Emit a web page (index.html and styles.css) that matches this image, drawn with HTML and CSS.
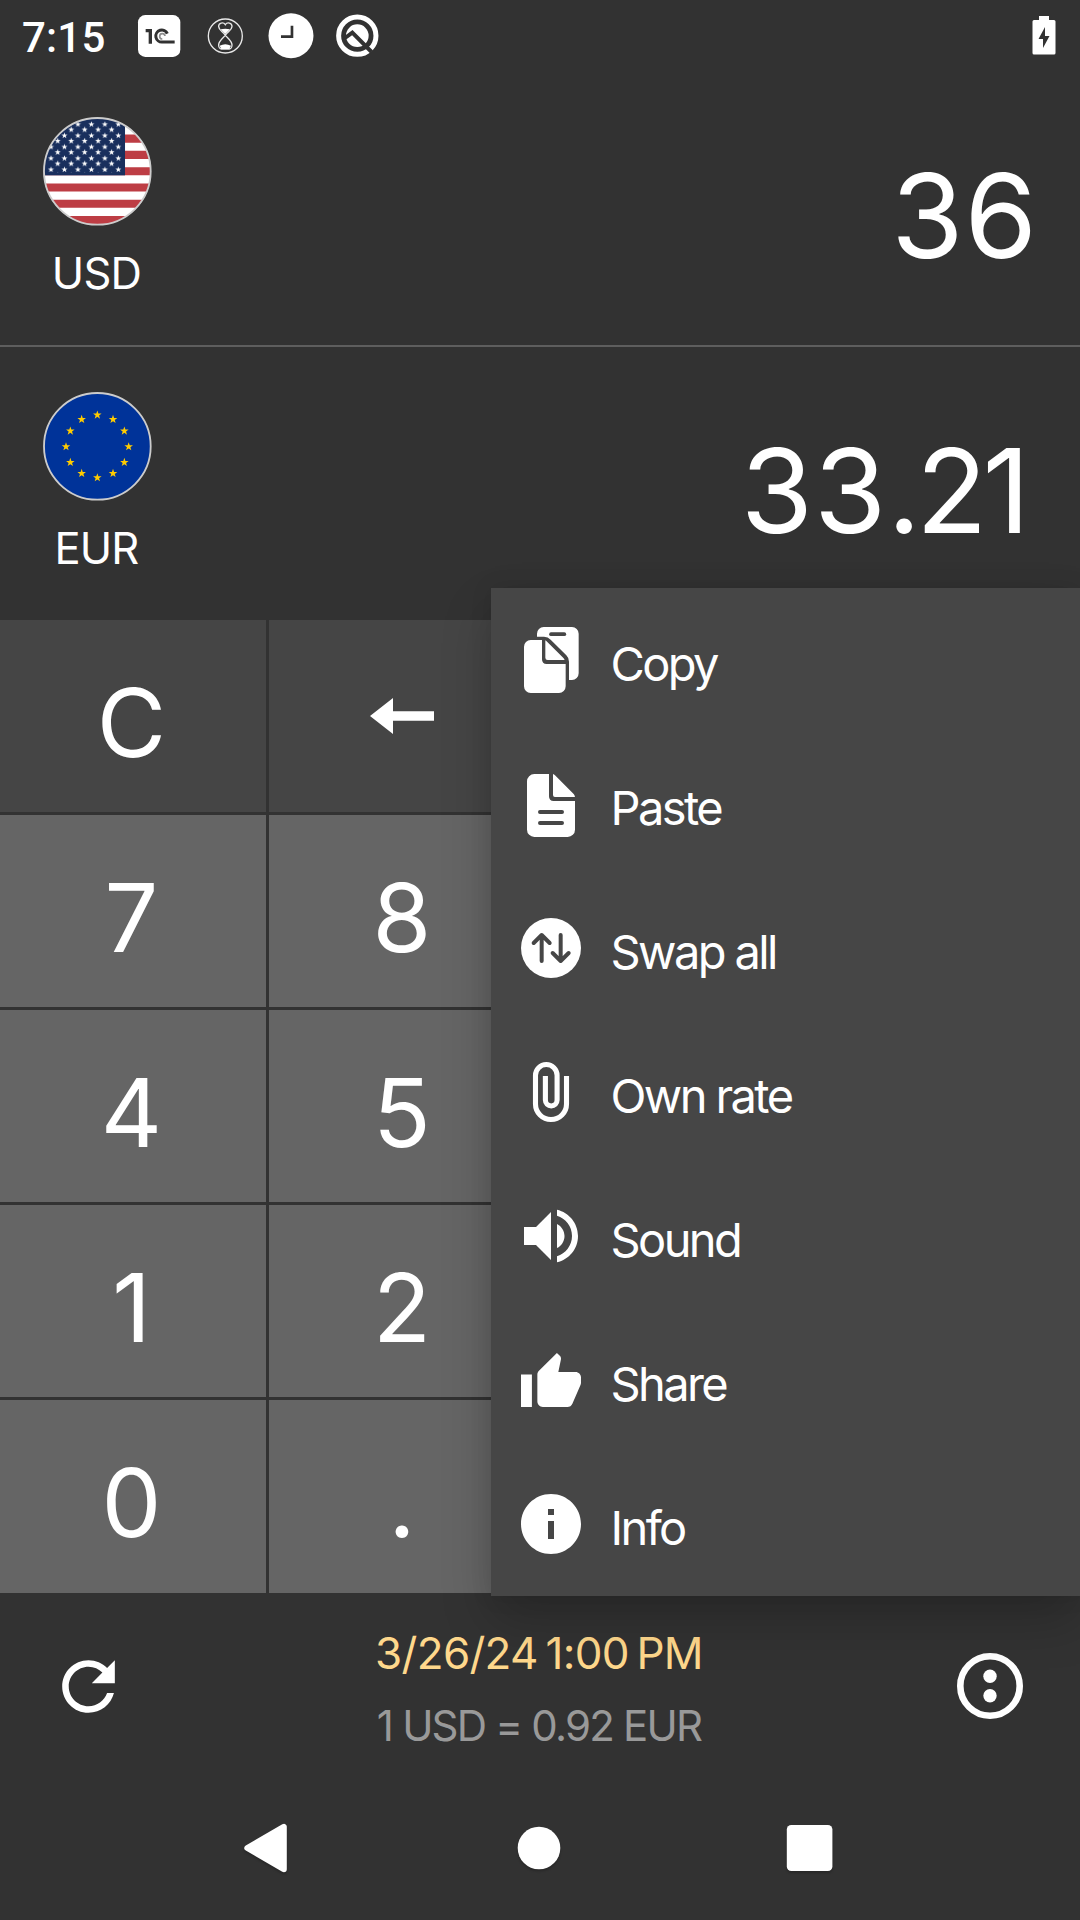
FILE: index.html
```html
<!DOCTYPE html>
<html lang="en">
<head>
<meta charset="utf-8">
<title>Currency converter</title>
<link rel="stylesheet" href="styles.css">
</head>
<body>
<div class="screen">
  <header class="status">
    <span class="clock">7:15</span>
    <svg class="status-icons" viewBox="400 0 760 216">
      <rect x="415" y="45" width="127" height="126" rx="22" fill="#fff"/>
      <g fill="none" stroke="#323232" stroke-width="10">
        <path d="M438 92h14v39"/>
        <path d="M503 101a18 18 0 1 0-15 25h37" stroke-width="9"/>
        <path d="M496 108a8 8 0 1 0-8 9" stroke-width="5" opacity=".55"/>
      </g>
      <g fill="none" stroke="#e8e8e8" stroke-width="4">
        <circle cx="677" cy="108" r="51"/>
        <path d="M677 74c-5-8-21-7-20 6 1 12 13 15 20 26 7-11 19-14 20-26 1-13-15-14-20-6zM677 106c-7 8-21 18-20 30 0 6 4 11 8 11h24c4 0 8-5 8-11 1-12-13-22-20-30z" stroke-width="4"/>
      </g>
      <path d="M663 88q14-4 28 0l-14 14zM660 137q17-9 34 0l-5 10h-24z" fill="#fff"/>
      <circle cx="874" cy="107" r="67.500" fill="#fff"/>
      <path d="M877 77v33h-33" fill="none" stroke="#323232" stroke-width="8"/>
      <circle cx="1073" cy="107" r="56" fill="none" stroke="#fff" stroke-width="15"/>
      <circle cx="1073" cy="107" r="34" fill="#fff"/>
      <path d="M1036 114l22-16 58 58" fill="none" stroke="#323232" stroke-width="12"/>
    </svg>
    <svg class="battery" viewBox="0 0 24 40">
      <path d="M7 0h10v4h5a1.500 1.500 0 0 1 1.500 1.500v31.500a1.500 1.500 0 0 1-1.500 1.500H2A1.500 1.500 0 0 1 .5 37V5.500A1.500 1.500 0 0 1 2 4h5z" fill="#fff"/>
      <path d="M13 11L6.500 23H11v9l6.500-12H13z" fill="#323232"/>
    </svg>
  </header>

  <section class="currency">
    <div class="unit">
      <svg class="flag" viewBox="39 50 326 326">
        <defs>
          <clipPath id="disc"><circle cx="202" cy="213" r="161"/></clipPath>
          <path id="star" d="M0-10L2.350-3.240 9.510-3.090 3.800 1.240 5.880 8.090 0 4 -5.880 8.090 -3.800 1.240 -9.510-3.090 -2.350-3.240z"/>
          <pattern id="stars" patternUnits="userSpaceOnUse" x="53" y="62" width="40.400" height="34">
            <use href="#star" transform="translate(10 10) scale(.95)" fill="#fff"/>
            <use href="#star" transform="translate(30.200 26) scale(.95)" fill="#fff"/>
          </pattern>
        </defs>
        <g clip-path="url(#disc)">
          <rect x="39" y="50" width="326" height="326" fill="#fff"/>
          <path d="M39 66h326M39 115h326M39 163.800h326M39 212.600h326M39 261.400h326M39 310.200h326M39 359h326" stroke="#bd3d44" stroke-width="24.400"/>
          <rect x="39" y="50" width="246" height="175" fill="#192f5d"/>
          <rect x="53" y="62" width="221.500" height="154" fill="url(#stars)"/>
        </g>
        <circle cx="202" cy="213" r="160" fill="none" stroke="#ccc" stroke-width="5.500"/>
      </svg>
      <span class="code">USD</span>
    </div>
    <span class="amount">36</span>
  </section>

  <section class="currency currency-last">
    <div class="unit">
      <svg class="flag" viewBox="-163 -163 326 326">
        <circle r="160" fill="#039" stroke="#ccc" stroke-width="5.500"/>
        <g fill="#fc0">
          <use href="#star" transform="translate(0 -94) scale(1.350)"/>
          <use href="#star" transform="translate(47 -81) scale(1.350)"/>
          <use href="#star" transform="translate(81 -46) scale(1.350)"/>
          <use href="#star" transform="translate(94 1) scale(1.350)"/>
          <use href="#star" transform="translate(81 48) scale(1.350)"/>
          <use href="#star" transform="translate(47 81) scale(1.350)"/>
          <use href="#star" transform="translate(0 94) scale(1.350)"/>
          <use href="#star" transform="translate(-47 81) scale(1.350)"/>
          <use href="#star" transform="translate(-81 48) scale(1.350)"/>
          <use href="#star" transform="translate(-94 1) scale(1.350)"/>
          <use href="#star" transform="translate(-81 -46) scale(1.350)"/>
          <use href="#star" transform="translate(-47 -81) scale(1.350)"/>
        </g>
      </svg>
      <span class="code">EUR</span>
    </div>
    <span class="amount">33<span class="tight">.2</span>1</span>
  </section>

  <main class="keypad">
    <div class="key fn">C</div>
    <div class="key fn icon-key">
      <svg class="backspace" viewBox="0 0 64 36"><path d="M0 18L23 0v13.200h41v9.600H23V36z" fill="#fff"/></svg>
    </div>
    <div class="key fn"></div><div class="key fn"></div>
    <div class="key">7</div><div class="key">8</div><div class="key"></div><div class="key fn"></div>
    <div class="key">4</div><div class="key">5</div><div class="key"></div><div class="key fn"></div>
    <div class="key">1</div><div class="key">2</div><div class="key"></div><div class="key fn"></div>
    <div class="key">0</div><div class="key">.</div><div class="key"></div><div class="key fn"></div>
  </main>

  <footer class="bar">
    <svg class="refresh" viewBox="0 0 24 24"><path fill="#fff" d="M17.650 6.350C16.200 4.900 14.210 4 12 4c-4.420 0-7.990 3.580-7.990 8s3.570 8 7.990 8c3.730 0 6.840-2.550 7.730-6h-2.080c-.82 2.330-3.040 4-5.650 4-3.310 0-6-2.690-6-6s2.690-6 6-6c1.660 0 3.140.69 4.220 1.780L13 11h7V4l-2.350 2.350z"/></svg>
    <div class="rate">
      <span class="date">3/26/24 1:00 PM</span>
      <span class="quote">1 USD = 0.92 EUR</span>
    </div>
    <svg class="more" viewBox="0 0 66 66">
      <circle cx="33" cy="33" r="29.700" fill="none" stroke="#fff" stroke-width="6.600"/>
      <circle cx="33" cy="23.300" r="6.700" fill="#fff"/>
      <circle cx="33" cy="42.700" r="6.700" fill="#fff"/>
    </svg>
  </footer>

  <nav class="nav">
    <svg class="nav-icon" viewBox="0 0 60 60"><path d="M9.300 30L45.800 8.800v42.400z" fill="#fff" stroke="#fff" stroke-width="6" stroke-linejoin="round"/></svg>
    <svg class="nav-icon" viewBox="0 0 60 60"><circle cx="30" cy="30" r="21.300" fill="#fff"/></svg>
    <svg class="nav-icon" viewBox="0 0 60 60"><rect x="6.800" y="7" width="45.600" height="46" rx="4.500" fill="#fff"/></svg>
  </nav>

  <div class="menu">
    <div class="item">
      <svg class="item-icon" viewBox="0 0 216 216">
        <path fill="#fff" d="M66 38v-9a20 20 0 0 1 20-20h85a20 20 0 0 1 20 20v119a20 20 0 0 1-20 20h-9v-55q0-11-8-19l-47-47q-8-9-20-9z"/>
        <path fill="#fff" d="M47 48h34v58q0 14 14 14h57v67a20 20 0 0 1-20 20H47a20 20 0 0 1-20-20V68a20 20 0 0 1 20-20z"/>
        <path fill="#fff" d="M91 49q3 2 6 5l46 46q4 4 6 8H98q-7 0-7-7z"/>
        <path d="M108 30.500h40" stroke="#464646" stroke-width="11" stroke-linecap="round"/>
      </svg>
      <span>Copy</span>
    </div>
    <div class="item">
      <svg class="item-icon" viewBox="0 0 216 216">
        <path fill="#fff" d="M58 18h44v67q0 14 14 14h64v86a22 22 0 0 1-22 22H58a22 22 0 0 1-22-22V40a22 22 0 0 1 22-22z"/>
        <path fill="#fff" d="M114 18q3 1 6 4l56 56q3 3 4 9h-60q-6 0-6-6z"/>
        <path d="M75 132h66M75 165h66" stroke="#464646" stroke-width="12" stroke-linecap="round"/>
      </svg>
      <span>Paste</span>
    </div>
    <div class="item">
      <svg class="item-icon" viewBox="0 0 216 216">
        <circle cx="108" cy="108" r="90" fill="#fff"/>
        <path d="M80 147V69M56 93l24-24 24 24M137 69v78M113 123l24 24 24-24" fill="none" stroke="#464646" stroke-width="12" stroke-linecap="round" stroke-linejoin="round"/>
      </svg>
      <span>Swap all</span>
    </div>
    <div class="item">
      <svg class="item-icon" viewBox="0 0 24 24"><path d="M17.170 6.670V16a5.170 5.170 0 0 1-10.340 0V6.450a3.600 3.600 0 0 1 7.200 0V14.700a1.950 1.950 0 0 1-3.900 0V6.670" fill="none" stroke="#fff" stroke-width="1.700"/></svg>
      <span>Own rate</span>
    </div>
    <div class="item">
      <svg class="item-icon" viewBox="0 0 24 24"><path fill="#fff" d="M3 9v6h4l5 5V4L7 9H3zm13.500 3c0-1.770-1.020-3.290-2.500-4.030v8.050c1.480-.73 2.500-2.250 2.500-4.020zM14 3.230v2.060c2.890.86 5 3.540 5 6.710s-2.110 5.850-5 6.710v2.060c4.010-.91 7-4.490 7-8.770s-2.990-7.860-7-8.770z"/></svg>
      <span>Sound</span>
    </div>
    <div class="item">
      <svg class="item-icon" viewBox="0 0 24 24"><path fill="#fff" transform="translate(1.090 2.100) scale(.909 .9)" d="M1 21h4V9H1v12zm22-11c0-1.100-.9-2-2-2h-6.310l.95-4.570.03-.32c0-.41-.17-.79-.44-1.060L14.170 1 7.590 7.590C7.220 7.950 7 8.450 7 9v10c0 1.100.9 2 2 2h9c.83 0 1.540-.5 1.840-1.220l3.020-7.050c.09-.23.14-.47.14-.73v-2z"/></svg>
      <span>Share</span>
    </div>
    <div class="item">
      <svg class="item-icon" viewBox="0 0 24 24"><path fill="#fff" d="M12 2C6.480 2 2 6.480 2 12s4.480 10 10 10 10-4.480 10-10S17.520 2 12 2zm1 15h-2v-6h2v6zm0-8h-2V7h2v2z"/></svg>
      <span>Info</span>
    </div>
  </div>
</div>
</body>
</html>
```
FILE: styles.css
```css
* {
  box-sizing: border-box;
}

body {
  margin: 0;
  background: #323232;
  color: #fff;
  font-family: Inter, "Liberation Sans", sans-serif;
}

.screen {
  position: relative;
  display: flex;
  flex-direction: column;
  width: 1080px;
  height: 1920px;
  overflow: hidden;
  background: #323232;
}

svg {
  display: block;
  flex: none;
}

.status {
  display: flex;
  align-items: flex-start;
  height: 72px;
  padding: 0 24px 0 22px;
}

.clock {
  width: 111px;
  font: 500 42px/76px Roboto, sans-serif;
  letter-spacing: .2px;
}

.status-icons {
  width: 253.300px;
  height: 72px;
}

.battery {
  width: 24px;
  height: 40px;
  margin: 16px 0 0 auto;
}

.currency {
  display: flex;
  justify-content: space-between;
  height: 275px;
  padding: 0 42px 0 37px;
  border-bottom: 2px solid #5e5e5e;
}

.currency-last {
  height: 273px;
  padding-right: 49px;
  border-bottom: 0;
}

.unit {
  display: flex;
  flex-direction: column;
  align-items: center;
  width: 121px;
  padding-top: 45px;
}

.flag {
  width: 108.700px;
  height: 108.700px;
}

.code {
  margin-top: 19px;
  padding-right: 2px;
  font-size: 43.500px;
  line-height: 56px;
  letter-spacing: -.8px;
}

.amount {
  padding-top: 14px;
  font-size: 117px;
  line-height: 259px;
  letter-spacing: 1px;
}

.tight {
  letter-spacing: -5px;
}

.keypad {
  display: grid;
  grid-template-columns: repeat(4, 267.500px);
  grid-template-rows: repeat(4, 192px) 193px;
  gap: 3px;
  margin-left: -2px;
}

.key {
  display: flex;
  align-items: center;
  justify-content: center;
  padding: 12px .5px 0 0;
  background: #656565;
  font-size: 95px;
  line-height: 1;
}

.fn {
  background: #454545;
}

.icon-key {
  padding: 0;
}

.backspace {
  width: 64px;
  height: 36px;
}

.bar {
  display: flex;
  align-items: center;
  justify-content: space-between;
  height: 183px;
  padding: 3px 57px 0 49px;
}

.refresh {
  width: 79px;
  height: 79px;
}

.rate {
  display: flex;
  flex-direction: column;
  align-items: center;
  gap: 17px;
  padding: 7px 7px 0 0;
}

.date {
  color: #ffd88c;
  font-size: 44px;
  line-height: 56px;
  letter-spacing: -.700px;
  word-spacing: -4px;
}

.quote {
  color: #999;
  font-size: 42px;
  line-height: 56px;
  letter-spacing: -1.800px;
}

.more {
  width: 66px;
  height: 66px;
}

.nav {
  display: flex;
  align-items: center;
  justify-content: space-between;
  height: 144px;
  padding: 0 240px 0 238px;
}

.nav-icon {
  width: 60px;
  height: 60px;
  filter: drop-shadow(0 2px 1px rgba(0, 0, 0, .2));
}

.menu {
  position: absolute;
  top: 588px;
  right: 0;
  width: 589px;
  background: #464646;
  box-shadow: 0 24px 48px rgba(0, 0, 0, .2), 0 0 20px rgba(0, 0, 0, .1);
}

.item {
  display: flex;
  align-items: center;
  gap: 23.500px;
  height: 144px;
  padding-left: 24px;
  font-size: 47px;
  letter-spacing: -2.600px;
}

.item span {
  padding-top: 6px;
}

.item-icon {
  width: 72px;
  height: 72px;
}
```
